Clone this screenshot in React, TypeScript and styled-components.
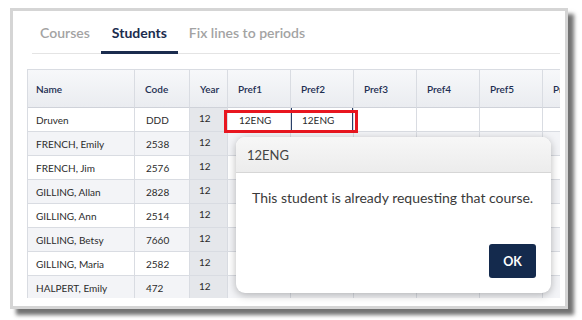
import React from 'react';
import styled, { createGlobalStyle } from 'styled-components';

interface StudentRow {
  name: string;
  code: string;
  year: string;
  prefs: string[];
}

const COLUMNS: string[] = ['Name', 'Code', 'Year', 'Pref1', 'Pref2', 'Pref3', 'Pref4', 'Pref5', 'Pref6'];

const STUDENTS: StudentRow[] = [
  { name: 'Druven', code: 'DDD', year: '12', prefs: ['12ENG', '12ENG'] },
  { name: 'FRENCH, Emily', code: '2538', year: '12', prefs: [] },
  { name: 'FRENCH, Jim', code: '2576', year: '12', prefs: [] },
  { name: 'GILLING, Allan', code: '2828', year: '12', prefs: [] },
  { name: 'GILLING, Ann', code: '2514', year: '12', prefs: [] },
  { name: 'GILLING, Betsy', code: '7660', year: '12', prefs: [] },
  { name: 'GILLING, Maria', code: '2582', year: '12', prefs: [] },
  { name: 'HALPERT, Emily', code: '472', year: '12', prefs: [] },
];

function App(): JSX.Element {
  return (
    <Page>
      <GlobalStyle />
      <Frame>
        <TabBar>
          <Tab>Courses</Tab>
          <Tab active>Students</Tab>
          <Tab>Fix lines to periods</Tab>
        </TabBar>
        <GridWrap>
          <Grid>
            {COLUMNS.map((col) => (
              <HeaderCell key={col}>{col}</HeaderCell>
            ))}
            {STUDENTS.map((student, rowIndex) => {
              const striped = rowIndex % 2 === 1;
              return (
                <React.Fragment key={student.name}>
                  <Cell striped={striped} first>
                    {student.name}
                  </Cell>
                  <Cell striped={striped}>{student.code}</Cell>
                  <YearCell>{student.year}</YearCell>
                  {[0, 1, 2, 3, 4, 5].map((i) => (
                    <Cell key={i} striped={striped} focused={rowIndex === 0 && i === 1}>
                      {student.prefs[i] ?? ''}
                    </Cell>
                  ))}
                </React.Fragment>
              );
            })}
          </Grid>
          <ErrorHighlight />
        </GridWrap>
        <Dialog>
          <DialogHeader>12ENG</DialogHeader>
          <DialogBody>
            <DialogText>This student is already requesting that course.</DialogText>
            <DialogActions>
              <OkButton>OK</OkButton>
            </DialogActions>
          </DialogBody>
        </Dialog>
      </Frame>
    </Page>
  );
}

export default App;

const GlobalStyle = createGlobalStyle`
  html, body {
    margin: 0;
    padding: 0;
    background: #ffffff;
  }
  body {
    font-family: Lato, "Open Sans", sans-serif;
    width: 582px;
    height: 320px;
    overflow: hidden;
  }
`;

const Page = styled.main`
  width: 582px;
  height: 320px;
  padding: 8px 0 0 10px;
  box-sizing: border-box;
`;

const Frame = styled.section`
  position: relative;
  width: 558px;
  height: 301px;
  box-sizing: border-box;
  border: 3px solid #d5d5d5;
  background: #ffffff;
  box-shadow: 6px 6px 4px #727272;
  display: flex;
  flex-direction: column;
`;

const TabBar = styled.nav`
  display: flex;
  margin: 3px 5px 0 19px;
  height: 39px;
  border-bottom: 1px solid #e4e4e4;
`;

const Tab = styled.div<{ active?: boolean }>`
  display: flex;
  align-items: center;
  padding: 0 11px;
  font-size: 14px;
  font-weight: ${({ active }) => (active ? 700 : 600)};
  color: ${({ active }) => (active ? '#1b2c4e' : '#a3a3a3')};
  border-bottom: 3px solid ${({ active }) => (active ? '#1b2c4e' : 'transparent')};
  margin-bottom: -1px;
  &:first-child {
    padding-left: 8px;
  }
`;

const GridWrap = styled.div`
  position: relative;
  margin: 15px 5px 0 14px;
  height: 228px;
  overflow: hidden;
  border-top: 1px solid #d9dce2;
  border-left: 1px solid #d9dce2;
`;

const Grid = styled.div`
  display: grid;
  grid-template-columns: 107px 55px 38px repeat(6, 63px);
  grid-template-rows: 38px;
  grid-auto-rows: 24px;
  font-size: 10px;
`;

const HeaderCell = styled.div`
  display: flex;
  align-items: center;
  padding-left: 10px;
  box-sizing: border-box;
  background: linear-gradient(#f7f8fa, #eaecf0);
  border-right: 1px solid #d9dce2;
  border-bottom: 1px solid #cfd2d9;
  color: #1e2f52;
  font-weight: 600;
  white-space: nowrap;
  &:first-child {
    padding-left: 8px;
  }
`;

const Cell = styled.div<{ striped?: boolean; first?: boolean; focused?: boolean }>`
  display: flex;
  align-items: center;
  padding-left: ${({ first }) => (first ? '8px' : '11px')};
  box-sizing: border-box;
  background: ${({ striped }) => (striped ? '#f3f4f7' : '#ffffff')};
  border-right: 1px solid #d9dce2;
  border-bottom: 1px solid #d9dce2;
  color: #2b2b2b;
  white-space: nowrap;
  box-shadow: ${({ focused }) =>
    focused ? 'inset 1px 0 0 #2a4068, inset -1px 0 0 #2a4068' : 'none'};
`;

const YearCell = styled.div`
  display: flex;
  align-items: center;
  padding: 0 0 4px 9px;
  box-sizing: border-box;
  background: #e5e7eb;
  border-right: 1px solid #d9dce2;
  border-bottom: 1px solid #d9dce2;
  color: #2b2b2b;
`;

const ErrorHighlight = styled.div`
  position: absolute;
  left: 196px;
  top: 40px;
  width: 134px;
  height: 23px;
  box-sizing: border-box;
  border: 3px solid #e8161f;
`;

const Dialog = styled.div`
  position: absolute;
  left: 223px;
  top: 126px;
  width: 315px;
  height: 156px;
  display: flex;
  flex-direction: column;
  background: #ffffff;
  border-radius: 9px;
  box-shadow: 0 2px 9px rgba(0, 0, 0, 0.28);
  overflow: hidden;
`;

const DialogHeader = styled.header`
  display: flex;
  align-items: center;
  height: 36px;
  padding-left: 11px;
  box-sizing: border-box;
  background: linear-gradient(#f7f7f7, #ececec);
  border-bottom: 1px solid #d6d6d6;
  font-size: 13px;
  color: #444444;
`;

const DialogBody = styled.div`
  flex: 1;
  display: flex;
  flex-direction: column;
  padding: 16px 15px 15px 16px;
`;

const DialogText = styled.p`
  margin: 0;
  font-size: 14px;
  color: #3a3a3a;
`;

const DialogActions = styled.div`
  margin-top: auto;
  display: flex;
  justify-content: flex-end;
`;

const OkButton = styled.button`
  width: 47px;
  height: 34px;
  border: none;
  border-radius: 3px;
  background: #142a4d;
  color: #ffffff;
  font-family: Lato, "Open Sans", sans-serif;
  font-size: 12.5px;
  font-weight: 700;
`;
